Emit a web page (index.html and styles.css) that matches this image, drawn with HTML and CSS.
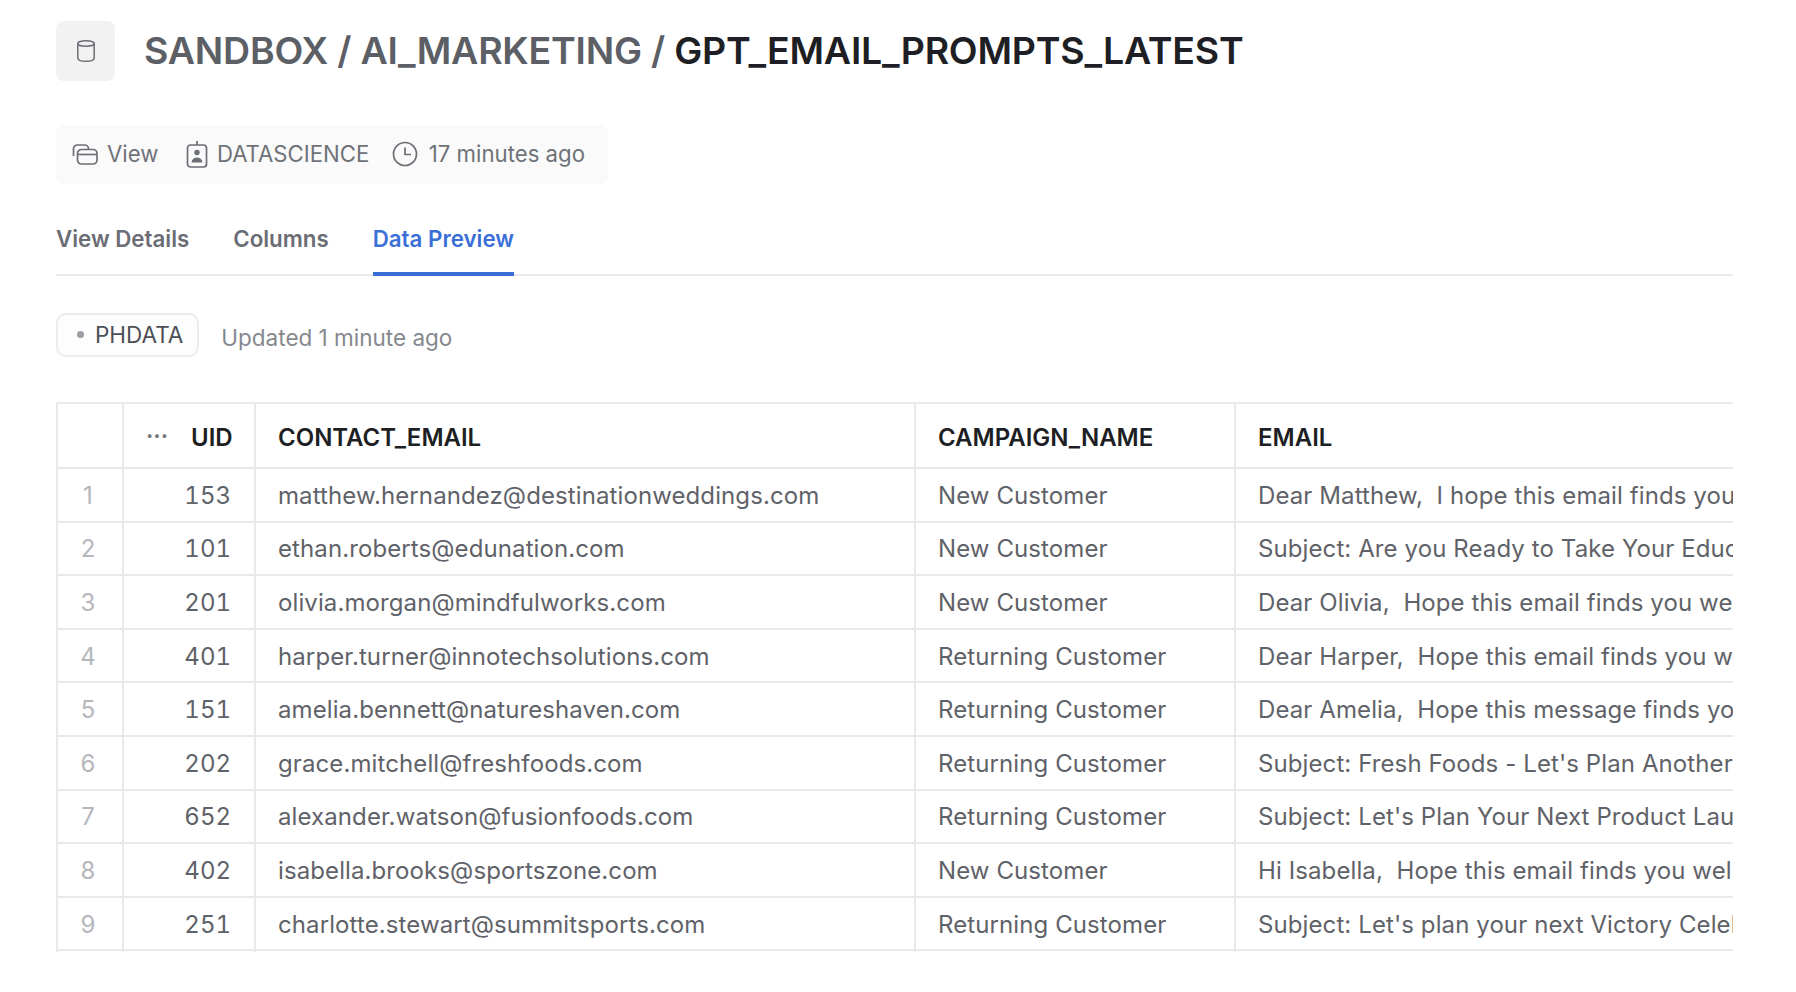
FILE: index.html
```html
<!DOCTYPE html>
<html lang="en">
<head>
<meta charset="utf-8">
<title>GPT_EMAIL_PROMPTS_LATEST</title>
<link rel="stylesheet" href="styles.css">
</head>
<body>
<main class="page">
  <header class="title-row">
    <div class="obj-icon">
      <svg width="20" height="24" viewBox="0 0 20 24" fill="none" stroke="#6b6e75" stroke-width="1.5"><ellipse cx="10" cy="4.500" rx="8.200" ry="2.800"/><path d="M1.800 4.500V19c0 2 3.600 3.300 8.200 3.300s8.200-1.300 8.200-3.300V4.500"/></svg>
    </div>
    <h1 class="title"><span class="crumb">SANDBOX / AI_MARKETING / </span>GPT_EMAIL_PROMPTS_LATEST</h1>
  </header>

  <div class="meta">
    <span class="meta-item">
      <svg width="26" height="22" viewBox="0 0 26 22" fill="none" stroke="#6b6e75" stroke-width="1.700"><path d="M1.500 13V6a4 4 0 0 1 4-4h7a4 4 0 0 1 4 4"/><rect x="5.500" y="6.500" width="19.500" height="14.500" rx="4"/><path d="M5.500 11.500h19.500"/></svg>
      View
    </span>
    <span class="meta-item">
      <svg width="22" height="28" viewBox="0 0 22 28" fill="none" stroke="#6b6e75" stroke-width="1.700"><rect x="1.500" y="5" width="19" height="22" rx="3"/><path d="M11 1v4"/><circle cx="11" cy="12.500" r="2.700" fill="#6b6e75" stroke="none"/><path d="M5.500 22.500c.5-3.500 2.500-5 5.500-5s5 1.500 5.500 5z" fill="#6b6e75" stroke="none"/></svg>
      DATASCIENCE
    </span>
    <span class="meta-item">
      <svg width="26" height="26" viewBox="0 0 26 26" fill="none" stroke="#6b6e75" stroke-width="1.700"><circle cx="13" cy="13" r="11.500"/><path d="M13 6.500V13.500h6"/></svg>
      17 minutes ago
    </span>
  </div>

  <nav class="tabs">
    <a class="tab">View Details</a>
    <a class="tab">Columns</a>
    <a class="tab active">Data Preview</a>
  </nav>

  <div class="status">
    <span class="chip"><i class="dot"></i>PHDATA</span>
    <span class="updated">Updated 1 minute ago</span>
  </div>

  <div class="grid-wrap">
    <table class="grid">
      <colgroup>
        <col class="c-idx"><col class="c-uid"><col class="c-contact"><col class="c-camp"><col class="c-email">
      </colgroup>
      <thead>
        <tr>
          <th></th>
          <th class="num"><span class="more">&middot;&middot;&middot;</span>UID</th>
          <th>CONTACT_EMAIL</th>
          <th>CAMPAIGN_NAME</th>
          <th>EMAIL</th>
        </tr>
      </thead>
      <tbody>
        <tr><td class="idx">1</td><td class="num">153</td><td>matthew.hernandez@destinationweddings.com</td><td>New Customer</td><td>Dear Matthew,&nbsp; I hope this email finds you well and planning</td></tr>
        <tr><td class="idx">2</td><td class="num">101</td><td>ethan.roberts@edunation.com</td><td>New Customer</td><td>Subject: Are you Ready to Take Your Education Further</td></tr>
        <tr><td class="idx">3</td><td class="num">201</td><td>olivia.morgan@mindfulworks.com</td><td>New Customer</td><td>Dear Olivia,&nbsp; Hope this email finds you well and thriving</td></tr>
        <tr><td class="idx">4</td><td class="num">401</td><td>harper.turner@innotechsolutions.com</td><td>Returning Customer</td><td>Dear Harper,&nbsp; Hope this email finds you well and thriving</td></tr>
        <tr><td class="idx">5</td><td class="num">151</td><td>amelia.bennett@natureshaven.com</td><td>Returning Customer</td><td>Dear Amelia,&nbsp; Hope this message finds you well today</td></tr>
        <tr><td class="idx">6</td><td class="num">202</td><td>grace.mitchell@freshfoods.com</td><td>Returning Customer</td><td>Subject: Fresh Foods - Let's Plan Another Great Event</td></tr>
        <tr><td class="idx">7</td><td class="num">652</td><td>alexander.watson@fusionfoods.com</td><td>Returning Customer</td><td>Subject: Let's Plan Your Next Product Launch Together</td></tr>
        <tr><td class="idx">8</td><td class="num">402</td><td>isabella.brooks@sportszone.com</td><td>New Customer</td><td>Hi Isabella,&nbsp; Hope this email finds you well and ready</td></tr>
        <tr><td class="idx">9</td><td class="num">251</td><td>charlotte.stewart@summitsports.com</td><td>Returning Customer</td><td>Subject: Let's plan your next Victory Celebration Together</td></tr>
        <tr><td class="idx"></td><td class="num"></td><td></td><td></td><td></td></tr>
      </tbody>
    </table>
  </div>
</main>
</body>
</html>
```
FILE: styles.css
```css
* { box-sizing: border-box; }
html, body { margin: 0; padding: 0; background: #fff; }
body { font-family: Inter, "Liberation Sans", sans-serif; color: #1e1f24; overflow: hidden; height: 992px; }
.page { padding: 21px 63px 0 56px; }

.title-row { display: flex; align-items: center; gap: 29px; height: 60px; }
.obj-icon { width: 59px; height: 60px; border-radius: 8px; background: #f2f2f3; display: flex; align-items: center; justify-content: center; }
.title { margin: 0; font-size: 37.500px; line-height: 48px; font-weight: 600; letter-spacing: -0.23px; color: #1e1f24; white-space: nowrap; }
.crumb { color: #5c5f66; }

.meta { display: inline-flex; align-items: center; gap: 25.500px; height: 59px; margin-top: 44px; padding: 0 23px 2px 16px; background: #fafafa; border-radius: 8px; font-size: 22.200px; color: #6f7278; }
.meta-item { display: inline-flex; align-items: center; gap: 9px; white-space: nowrap; line-height: 26px; }
.meta-item:first-child { padding-right: 2px; }
.meta-item:last-child { margin-left: -3px; gap: 11px; }

.tabs { display: flex; gap: 44px; height: 91px; margin-top: 1px; align-items: flex-end; border-bottom: 2px solid #e9e9eb; }
.tab { display: block; font-size: 22.300px; font-weight: 600; line-height: 28px; height: 49px; color: #6a6d74; }
.tab.active { color: #3b6fd8; height: 51px; border-bottom: 4px solid #3b6fd8; margin-bottom: -2px; }

.status { display: flex; align-items: center; gap: 22px; margin-top: 37px; }
.chip { display: inline-flex; align-items: center; gap: 11px; height: 44px; padding: 0 14px 2px 19px; border: 2px solid #ececee; border-radius: 10px; background: #fdfdfd; font-size: 22.500px; color: #4c4f55; }
.dot { width: 7px; height: 7px; border-radius: 50%; background: #9a9da3; }
.updated { font-size: 22.500px; color: #85888e; position: relative; top: 2px; }

.grid-wrap { margin-top: 45px; height: 550px; overflow: hidden; }
.grid { width: 1677px; table-layout: fixed; border-collapse: collapse; font-size: 24px; }
.c-idx { width: 66px; }
.c-uid { width: 132px; }
.c-contact { width: 660px; }
.c-camp { width: 320px; }
.c-email { width: 499px; }
.grid th, .grid td { border: 2px solid #e9e9eb; padding: 0 22px; white-space: nowrap; overflow: hidden; text-align: left; }
.grid tr > :last-child { border-right: 0; padding-right: 0; }
.grid th { height: 65px; padding-top: 4px; font-weight: 600; font-size: 24px; color: #1e1f24; }
.grid td { height: 53.600px; padding-top: 1px; color: #5f6268; letter-spacing: 0.100px; }
.grid .num { text-align: right; }
.grid th.num { padding-right: 27px; }
.grid td.num { font-variant-numeric: tabular-nums; letter-spacing: 0; padding-right: 23px; }
.grid td.idx { text-align: center; color: #b5b7bb; padding: 1px 4px 0 0; }
.more { color: #77797f; font-size: 22px; font-weight: 700; margin-right: 23px; letter-spacing: 0; position: relative; top: -2px; }
```
